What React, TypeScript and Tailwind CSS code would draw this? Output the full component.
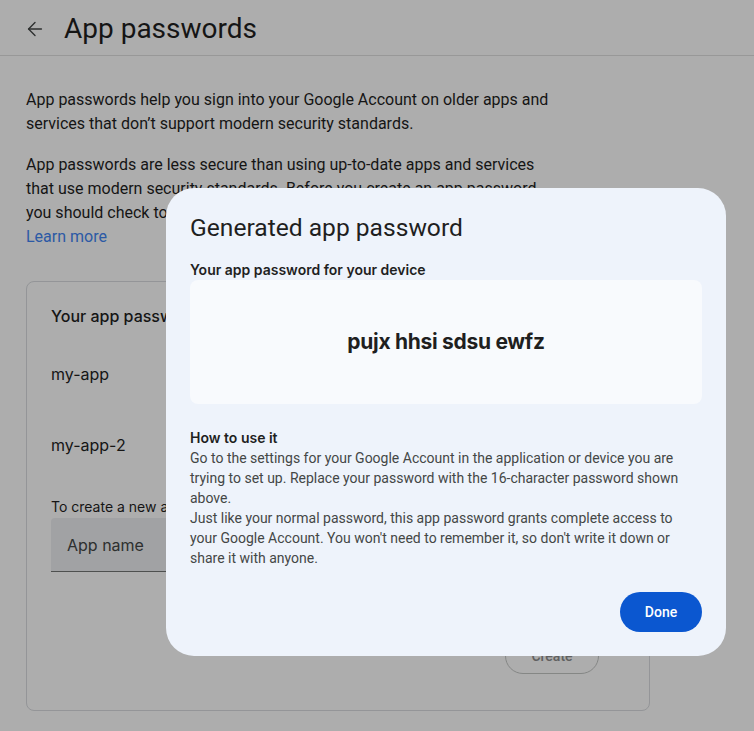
import { ArrowLeft } from 'lucide-react'

const apps = ['my-app', 'my-app-2']

const Header = () => (
  <div className="flex h-14 items-center border-b border-[#e1e1e1] pt-0.5">
    <div className="flex w-16 justify-center pl-1.5">
      <ArrowLeft className="h-[22px] w-[22px] text-[#444746]" strokeWidth={1.5} />
    </div>
    <h1 className="font-['Roboto'] text-[28px] leading-9 text-[#1f1f1f]">App passwords</h1>
  </div>
)

const AppsCard = () => (
  <div className="mt-[32px] mr-[104px] h-[430px] rounded-lg border border-[#dadce0] pt-[24px] pl-[24px] pr-[50px]">
    <div className="font-['Inter'] text-base leading-5 font-medium text-[#1f1f1f]">Your app passwords</div>
    <div className="mt-[12px] flex flex-col">
      {apps.map((name) => (
        <div key={name} className="flex h-[71px] items-center font-['Inter'] text-base text-[#1f1f1f]">
          {name}
        </div>
      ))}
    </div>
    <div className="mt-[17px] font-['Inter'] text-sm leading-5 text-[#1f1f1f]">
      To create a new app specific password, type a name for it below...
    </div>
    <div className="mt-px flex h-[54px] items-center rounded-t border-b border-[#747775] bg-[#eeeff2] px-4 font-['Inter'] text-base text-[#444746]">
      App name
    </div>
    <div className="mt-[66px] flex justify-end">
      <button className="h-9 w-[94px] rounded-full border border-[#c4c7c5] font-['Roboto'] text-sm font-medium text-[#8e8e8e]">
        Create
      </button>
    </div>
  </div>
)

const Dialog = () => (
  <div className="absolute top-[188px] left-[166px] flex w-[560px] flex-col rounded-[28px] bg-[#eef3fb] p-6">
    <h2 className="font-['Roboto'] text-[24.6px] leading-8 text-[#1f1f1f]">Generated app password</h2>
    <div className="mt-4 font-['Inter'] text-sm leading-5 font-semibold text-[#1f1f1f]">
      Your app password for your device
    </div>
    <div className="flex h-[124px] items-center justify-center rounded-lg bg-[#f8fafd]">
      <span className="font-['Inter'] text-[21px] font-bold tracking-[-0.3px] text-[#1f1f1f]">pujx hhsi sdsu ewfz</span>
    </div>
    <div className="mt-6 font-['Inter'] text-sm leading-5 font-semibold text-[#1f1f1f]">How to use it</div>
    <p className="font-['Roboto'] text-sm leading-5 text-[#444746]">
      Go to the settings for your Google Account in the application or device you are trying to set up. Replace
      your password with the 16-character password shown above.
      <br />
      Just like your normal password, this app password grants complete access to your Google Account. You won't
      need to remember it, so don't write it down or share it with anyone.
    </p>
    <div className="mt-6 flex justify-end">
      <button className="h-10 w-[82px] rounded-full bg-[#0b57d0] font-['Roboto'] text-sm font-medium text-white">
        Done
      </button>
    </div>
  </div>
)

export default function App() {
  return (
    <div className="relative h-[731px] w-[754px] overflow-hidden bg-white">
      <Header />
      <div className="pt-8 pl-[26px]">
        <p className="font-['Roboto'] text-base leading-6 text-[#1f1f1f]">
          App passwords help you sign into your Google Account on older apps and
          <br />
          services that don’t support modern security standards.
        </p>
        <p className="mt-[17px] w-[540px] font-['Roboto'] text-base leading-6 text-[#1f1f1f]">
          App passwords are less secure than using up-to-date apps and services that use modern security standards.
          Before you create an app password, you should check to see if your app needs this in order to sign in.
        </p>
        <a className="block font-['Roboto'] text-base leading-6 text-[#4285f4]">Learn more</a>
        <AppsCard />
      </div>
      <div className="absolute inset-0 bg-black/[0.32]" />
      <Dialog />
    </div>
  )
}
